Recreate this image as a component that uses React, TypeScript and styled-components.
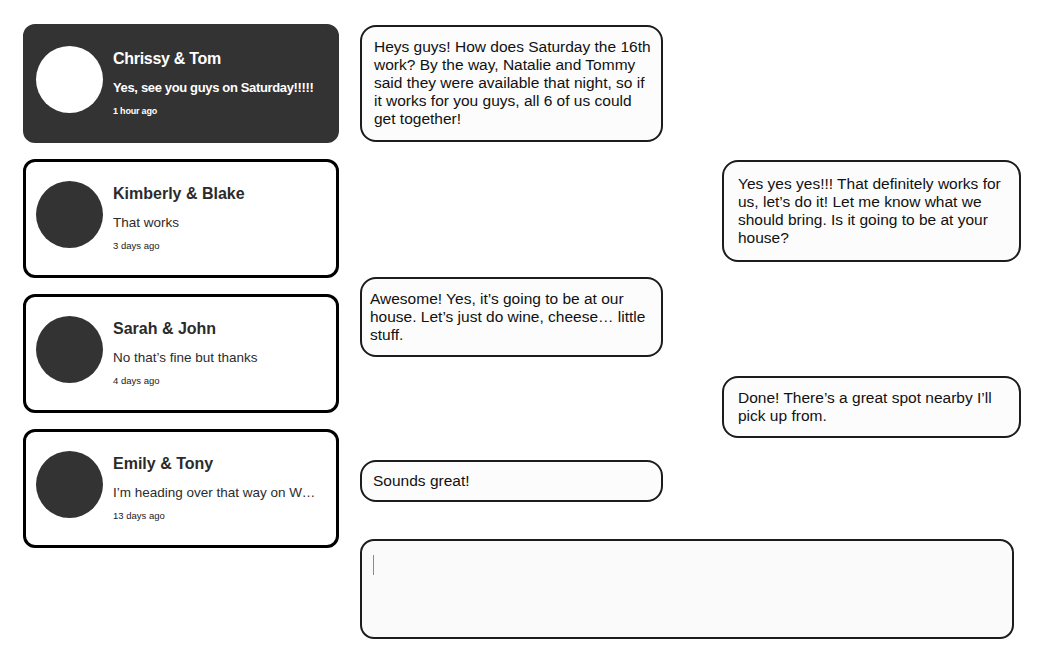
import React from 'react';
import styled, { createGlobalStyle, css } from 'styled-components';

type Conversation = {
  name: string;
  preview: string;
  time: string;
  active?: boolean;
};

type Message = {
  text: string;
  side: 'left' | 'right';
  top: number;
  pad: string;
};

const conversations: Conversation[] = [
  { name: 'Chrissy & Tom', preview: 'Yes, see you guys on Saturday!!!!!', time: '1 hour ago', active: true },
  { name: 'Kimberly & Blake', preview: 'That works', time: '3 days ago' },
  { name: 'Sarah & John', preview: 'No that’s fine but thanks', time: '4 days ago' },
  { name: 'Emily & Tony', preview: 'I’m heading over that way on Wednesday if you want to grab lunch', time: '13 days ago' },
];

const messages: Message[] = [
  {
    text: 'Heys guys! How does Saturday the 16th work? By the way, Natalie and Tommy said they were available that night, so if it works for you guys, all 6 of us could get together!',
    side: 'left',
    top: 0,
    pad: '11px 7px 12px 12px',
  },
  {
    text: 'Yes yes yes!!! That definitely works for us, let’s do it! Let me know what we should bring. Is it going to be at your house?',
    side: 'right',
    top: 18,
    pad: '13px 10px 13px 14px',
  },
  {
    text: 'Awesome! Yes, it’s going to be at our house. Let’s just do wine, cheese… little stuff.',
    side: 'left',
    top: 15,
    pad: '11px 10px 11px 8px',
  },
  {
    text: 'Done! There’s a great spot nearby I’ll pick up from.',
    side: 'right',
    top: 19,
    pad: '11px 10px 11px 14px',
  },
  {
    text: 'Sounds great!',
    side: 'left',
    top: 22,
    pad: '10px 10px 10px 11px',
  },
];

const App = () => {
  return (
    <>
      <GlobalStyle />
      <Page>
        <Sidebar>
          {conversations.map((c) => (
            <Card key={c.name} $active={c.active}>
              <Avatar $active={c.active} />
              <Info>
                <Name $active={c.active}>{c.name}</Name>
                <Preview $active={c.active}>{c.preview}</Preview>
                <Time $active={c.active}>{c.time}</Time>
              </Info>
            </Card>
          ))}
        </Sidebar>
        <Thread>
          {messages.map((m, i) => (
            <Bubble key={i} $side={m.side} $top={m.top} $pad={m.pad}>
              {m.text}
            </Bubble>
          ))}
          <Composer>
            <Caret />
          </Composer>
        </Thread>
      </Page>
    </>
  );
};

const GlobalStyle = createGlobalStyle`
  html, body {
    margin: 0;
    background: #ffffff;
  }
  body {
    font-family: "Liberation Sans", Arial, Helvetica, sans-serif;
    color: #111;
  }
  * {
    box-sizing: border-box;
  }
`;

const Page = styled.div`
  display: flex;
  align-items: flex-start;
  gap: 21px;
  padding: 24px 0 0 23px;
`;

const Sidebar = styled.div`
  width: 316px;
  display: flex;
  flex-direction: column;
  gap: 16px;
`;

const Card = styled.div<{ $active?: boolean }>`
  height: 119px;
  display: flex;
  align-items: flex-start;
  gap: 10px;
  padding: 19px 18px 0 10px;
  border: 3px solid ${(p) => (p.$active ? '#333' : '#000')};
  border-radius: 12px;
  background: ${(p) => (p.$active ? '#333' : '#fff')};
  color: ${(p) => (p.$active ? '#fff' : '#2b2b2b')};
  cursor: pointer;
`;

const Avatar = styled.div<{ $active?: boolean }>`
  width: 67px;
  height: 67px;
  flex-shrink: 0;
  border-radius: 50%;
  background: ${(p) => (p.$active ? '#fff' : '#333')};
`;

const Info = styled.div`
  flex: 1;
  min-width: 0;
`;

const tight = css`
  letter-spacing: -0.3px;
`;

const Name = styled.div<{ $active?: boolean }>`
  font-size: 16px;
  font-weight: 700;
  line-height: 25px;
  ${(p) => p.$active && tight}
`;

const Preview = styled.div<{ $active?: boolean }>`
  margin-top: 7px;
  font-size: 13.5px;
  line-height: 20px;
  white-space: nowrap;
  overflow: hidden;
  text-overflow: ellipsis;
  ${(p) =>
    p.$active &&
    css`
      font-size: 13px;
      font-weight: 700;
      letter-spacing: -0.35px;
    `}
`;

const Time = styled.div<{ $active?: boolean }>`
  margin-top: 7px;
  font-size: 9.5px;
  line-height: 12px;
  color: ${(p) => (p.$active ? '#fff' : '#1a1a1a')};
  ${(p) =>
    p.$active &&
    css`
      font-size: 9px;
      font-weight: 700;
      letter-spacing: -0.2px;
    `}
`;

const Thread = styled.div`
  width: 661px;
  display: flex;
  flex-direction: column;
  align-items: flex-start;
  padding-top: 1px;
`;

const Bubble = styled.div<{ $side: 'left' | 'right'; $top: number; $pad: string }>`
  width: ${(p) => (p.$side === 'left' ? '303px' : '299px')};
  align-self: ${(p) => (p.$side === 'left' ? 'flex-start' : 'flex-end')};
  margin-top: ${(p) => p.$top}px;
  padding: ${(p) => p.$pad};
  border: 2px solid #1c1c1c;
  border-radius: 16px;
  background: #fcfcfc;
  font-size: 15.5px;
  line-height: 18px;
  color: #111;
`;

const Composer = styled.div`
  width: 654px;
  height: 100px;
  margin-top: 37px;
  padding: 14px 11px;
  border: 2px solid #1c1c1c;
  border-radius: 14px;
  background: #fafafa;
`;

const Caret = styled.span`
  display: block;
  width: 1px;
  height: 20px;
  background: #8a8a8a;
`;

export default App;
